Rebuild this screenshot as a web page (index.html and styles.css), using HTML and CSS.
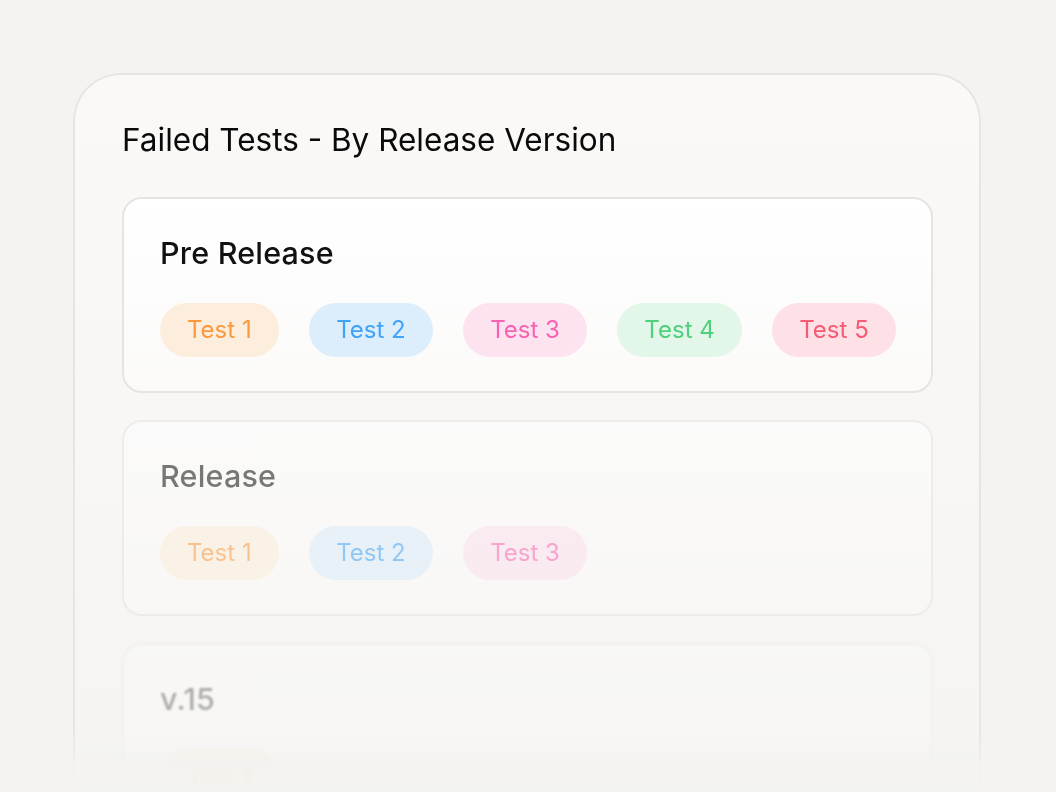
FILE: index.html
```html
<!DOCTYPE html>
<html>
<head>
<meta charset="utf-8">
<link rel="stylesheet" href="styles.css">
</head>
<body>
<div class="panel">
  <h1 class="panel-title">Failed Tests - By Release Version</h1>
  <div class="groups">
    <section class="group">
      <h2 class="group-title">Pre Release</h2>
      <div class="pills">
        <span class="pill orange">Test 1</span>
        <span class="pill blue">Test 2</span>
        <span class="pill pink">Test 3</span>
        <span class="pill green">Test 4</span>
        <span class="pill red">Test 5</span>
      </div>
    </section>
    <section class="group faded-1">
      <h2 class="group-title">Release</h2>
      <div class="pills">
        <span class="pill orange">Test 1</span>
        <span class="pill blue">Test 2</span>
        <span class="pill pink">Test 3</span>
      </div>
    </section>
    <section class="group faded-2">
      <h2 class="group-title">v.15</h2>
      <div class="pills">
        <span class="pill orange">Test 1</span>
      </div>
    </section>
  </div>
</div>
</body>
</html>
```

FILE: styles.css
```css
html, body {
  margin: 0;
  padding: 0;
}
body {
  width: 1056px;
  height: 792px;
  overflow: hidden;
  background: #f4f3f1;
  font-family: Inter, "Noto Sans", sans-serif;
}
.panel {
  box-sizing: border-box;
  margin: 73px 0 0 73px;
  width: 908px;
  height: 719px;
  border: 2px solid #e6e5e3;
  border-bottom: none;
  border-radius: 48px 48px 0 0;
  background: linear-gradient(to bottom, #faf9f7 0%, #f5f4f2 100%);
  padding: 45px 46px 0 47px;
  overflow: hidden;
  -webkit-mask-image: linear-gradient(to bottom, #000 0, #000 650px, rgba(0,0,0,0.55) 680px, rgba(0,0,0,0.12) 690px, rgba(0,0,0,0.08) 719px);
  mask-image: linear-gradient(to bottom, #000 0, #000 650px, rgba(0,0,0,0.55) 680px, rgba(0,0,0,0.12) 690px, rgba(0,0,0,0.08) 719px);
}
.panel-title {
  margin: 0;
  font-size: 31.5px;
  line-height: 40px;
  font-weight: 400;
  color: #0a0a0a;
}
.groups {
  margin-top: 37px;
  display: flex;
  flex-direction: column;
  gap: 27px;
}
.group {
  box-sizing: border-box;
  height: 196px;
  flex: none;
  border: 2px solid #e5e4e2;
  border-radius: 20px;
  background: linear-gradient(to bottom, #ffffff 0%, #fbfaf9 100%);
  padding: 36px 36px 34px;
  display: flex;
  flex-direction: column;
  gap: 32px;
}
.group-title {
  margin: 0;
  font-size: 30.5px;
  line-height: 36px;
  font-weight: 500;
  color: #111111;
  letter-spacing: 0.2px;
}
.pills {
  display: flex;
  gap: 30.5px;
}
.pill {
  flex: none;
  white-space: nowrap;
  display: inline-block;
  height: 54px;
  line-height: 54px;
  padding: 0 27px;
  border-radius: 27px;
  font-size: 24px;
  font-weight: 400;
}
.orange { background: #fdeddd; color: #fb993d; }
.blue { background: #dcedfc; color: #3fa3f7; }
.pink { background: #fde2ef; color: #f962b2; }
.green { background: #e2f6e9; color: #4fd07c; }
.red { background: #fde1e6; color: #f65a74; }

.faded-1 {
  opacity: 0.55;
  filter: blur(0.6px);
}
.faded-2 {
  opacity: 0.32;
  filter: blur(1.2px);
}
```
